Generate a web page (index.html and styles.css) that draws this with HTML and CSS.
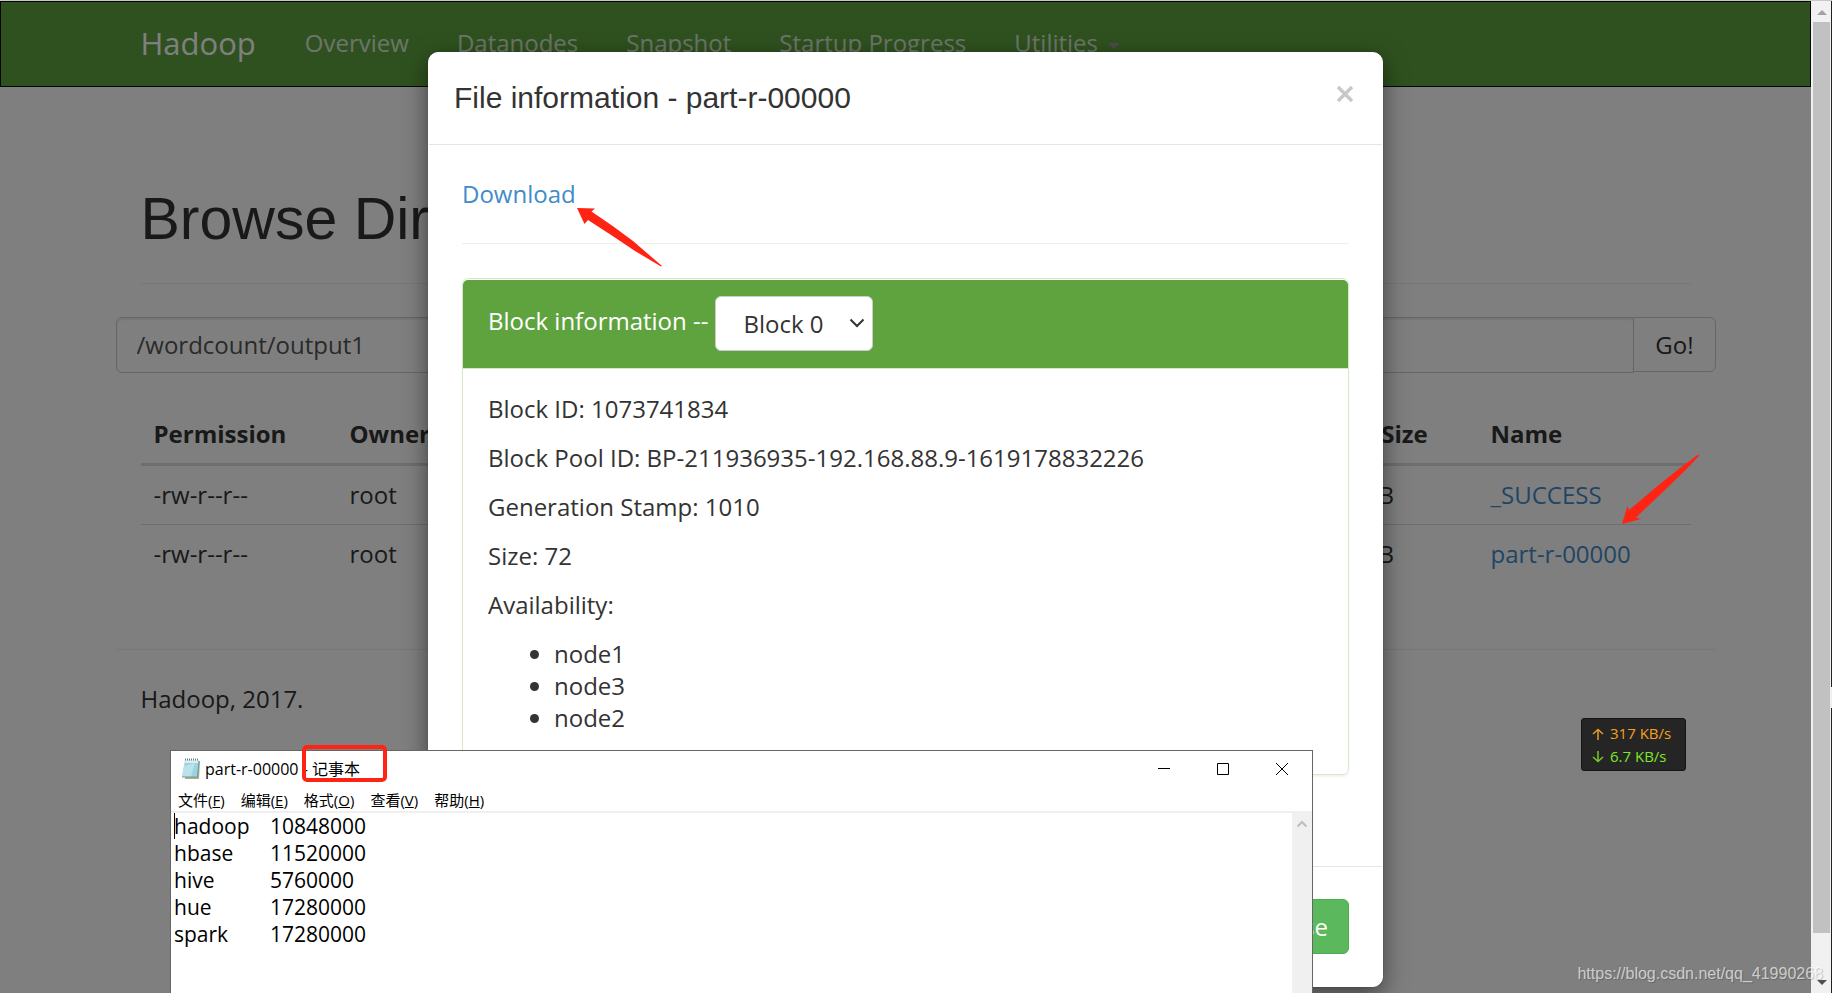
FILE: index.html
```html
<!DOCTYPE html>
<html lang="en">
  <head>
    <meta charset="UTF-8" />
    <meta name="viewport" content="width=device-width, initial-scale=1.0" />
    <title>Browsing HDFS</title>
    <link rel="stylesheet" href="styles.css">
  </head>
  <body>
    <div class="page">
      <header class="navbar">
        <div class="container">
          <a class="brand" href="#">Hadoop</a>
          <nav class="nav">
            <a href="#">Overview</a>
            <a href="#">Datanodes</a>
            <a href="#">Snapshot</a>
            <a href="#">Startup Progress</a>
            <a href="#">Utilities <span class="caret"></span></a>
          </nav>
        </div>
      </header>

      <main class="content">
        <div class="page-header">
          <h1>Browse Directory</h1>
        </div>
        <form class="input-group">
          <input type="text" value="/wordcount/output1" aria-label="Directory" />
          <button type="button">Go!</button>
        </form>
        <div class="table-wrap">
          <table class="files">
            <colgroup>
              <col class="col-permission" />
              <col class="col-owner" />
              <col class="col-group" />
              <col class="col-size" />
              <col class="col-replication" />
              <col class="col-block" />
              <col />
            </colgroup>
            <thead>
              <tr>
                <th>Permission</th>
                <th>Owner</th>
                <th>Group</th>
                <th>Size</th>
                <th>Replication</th>
                <th>Block Size</th>
                <th>Name</th>
              </tr>
            </thead>
            <tbody>
              <tr>
                <td>-rw-r--r--</td>
                <td>root</td>
                <td>supergroup</td>
                <td>0 B</td>
                <td>3</td>
                <td>128 MB</td>
                <td><a href="#">_SUCCESS</a></td>
              </tr>
              <tr>
                <td>-rw-r--r--</td>
                <td>root</td>
                <td>supergroup</td>
                <td>72 B</td>
                <td>3</td>
                <td>128 MB</td>
                <td><a href="#">part-r-00000</a></td>
              </tr>
            </tbody>
          </table>
        </div>
        <footer class="footer">
          <p>Hadoop, 2017.</p>
        </footer>
      </main>

      <div class="backdrop">
        <div class="modal" role="dialog" aria-labelledby="modal-title">
          <div class="modal-header">
            <h4 id="modal-title">File information - part-r-00000</h4>
            <button class="close" type="button" aria-label="Close">
              <svg width="18" height="18" viewBox="0 0 18 18">
                <path d="M2 2L16 16M16 2L2 16" fill="none" stroke="#c8c8c8" stroke-width="3.4" />
              </svg>
            </button>
          </div>
          <div class="modal-body">
            <a class="download" href="#">Download</a>
            <hr />
            <div class="panel">
              <div class="panel-heading">
                <label for="block-select">Block information --</label>
                <div class="select-wrap">
                  <select id="block-select">
                    <option>Block 0</option>
                  </select>
                  <svg width="16" height="10" viewBox="0 0 16 10">
                    <path d="M1.5 1.5L8 8L14.5 1.5" fill="none" stroke="#333" stroke-width="2" />
                  </svg>
                </div>
              </div>
              <div class="panel-body">
                <p>Block ID: 1073741834</p>
                <p>Block Pool ID: BP-211936935-192.168.88.9-1619178832226</p>
                <p>Generation Stamp: 1010</p>
                <p>Size: 72</p>
                <p>Availability:</p>
                <ul>
                  <li>node1</li>
                  <li>node3</li>
                  <li>node2</li>
                </ul>
              </div>
            </div>
          </div>
          <div class="modal-footer">
            <button class="btn-close" type="button">Close</button>
          </div>
        </div>
      </div>
    </div>

    <div class="scrollbar" aria-hidden="true">
      <svg width="10" height="5" viewBox="0 0 10 5"><path d="M0 5L5 0L10 5Z" fill="#a3a3a3" /></svg>
      <div class="thumb"></div>
      <svg width="10" height="5" viewBox="0 0 10 5"><path d="M0 0L5 5L10 0Z" fill="#505050" /></svg>
    </div>
    <div class="edge"></div>

    <section class="notepad">
      <div class="titlebar">
        <svg width="20" height="22" viewBox="0 0 20 22">
          <path d="M5 3L19 3L18 21L4 21Z" fill="#b9a983" />
          <path d="M4 2L18 2L16 19L1 19Z" fill="#9bd3e0" />
          <path d="M4 2L18 2L17.5 5L3.5 5Z" fill="#d9eff4" />
          <path d="M3 8L14 5L10 19L1 19Z" fill="#b9e2ea" />
          <path d="M4 1.5H18" stroke="#6f7f86" stroke-width="2" stroke-dasharray="1 1" />
          <path d="M18 3L16.5 19H1" fill="none" stroke="#5f9fae" stroke-width="1" />
        </svg>
        <span>part-r-00000 - 记事本</span>
        <div class="window-buttons">
          <button type="button" aria-label="Minimize">
            <svg width="12" height="12" viewBox="0 0 12 12"><path d="M0 5.5H12" stroke="#000" /></svg>
          </button>
          <button type="button" aria-label="Maximize">
            <svg width="12" height="12" viewBox="0 0 12 12"><path d="M.5 .5H11.5V11.5H.5Z" fill="none" stroke="#000" /></svg>
          </button>
          <button type="button" aria-label="Close window">
            <svg width="12" height="12" viewBox="0 0 12 12"><path d="M0 0L12 12M12 0L0 12" stroke="#000" /></svg>
          </button>
        </div>
      </div>
      <div class="menubar">
        <button type="button">文件(<u>F</u>)</button>
        <button type="button">编辑(<u>E</u>)</button>
        <button type="button">格式(<u>O</u>)</button>
        <button type="button">查看(<u>V</u>)</button>
        <button type="button">帮助(<u>H</u>)</button>
      </div>
      <div class="editor">
        <textarea aria-label="Text" spellcheck="false">hadoop	10848000
hbase	11520000
hive	5760000
hue	17280000
spark	17280000</textarea>
        <span class="cursor"></span>
        <div class="editor-scroll">
          <svg width="10" height="8" viewBox="0 0 10 8"><path d="M.5 6.5L5 2L9.5 6.5" fill="none" stroke="#bfbfbf" stroke-width="2.2" /></svg>
        </div>
      </div>
      <span class="highlight"></span>
    </section>

    <svg class="arrow arrow-download" width="86" height="60" viewBox="0 0 86 60">
      <path d="M0 1L18 1.5L14.5 4.5Q35 18 56 34L85 59L84 59.5L58 44Q36 29 11 13L7.5 17Z" fill="#ff2313" />
    </svg>
    <svg class="arrow arrow-file" width="78" height="70" viewBox="0 0 78 70">
      <path d="M0 69L5.5 51L7 55L38 29Q56 14 75.5 0L77.5 .5Q62 17 45 33L14 62.5L19 64Z" fill="#ff2313" />
    </svg>

    <div class="net-speed">
      <div class="up">
        <svg width="12" height="12" viewBox="0 0 12 12"><path d="M6 12V1.5M1 6L6 1.5L11 6" fill="none" stroke="#e69a28" stroke-width="1.5" /></svg>
        317 KB/s
      </div>
      <div class="down">
        <svg width="12" height="12" viewBox="0 0 12 12"><path d="M6 0V10.5M1 6L6 10.5L11 6" fill="none" stroke="#74c92c" stroke-width="1.5" /></svg>
        6.7 KB/s
      </div>
    </div>
    <div class="watermark">https://blog.csdn.net/qq_41990268</div>
  </body>
</html>
```

FILE: styles.css
```css
* {
  box-sizing: border-box;
}
body {
  margin: 0;
  height: 100vh;
  padding-top: 1px;
  display: flex;
  overflow: hidden;
  position: relative;
  background-color: #c8c8c8;
  color: #333;
  font-family: "Open Sans", "Noto Sans", "Noto Sans CJK SC", sans-serif;
  font-size: 24px;
  line-height: 32px;
}
a {
  color: #428bca;
  text-decoration: none;
}
button,
input,
select,
textarea {
  font: inherit;
  color: inherit;
}
h1,
h4,
p {
  margin: 0;
  font-weight: 400;
}
.page {
  position: relative;
  flex: 1;
  min-width: 0;
  background-color: #fff;
}

/* navbar */
.navbar {
  background-color: #5fa33f;
  border: 1px solid #080808;
}
/* the 20px on the left balances the scrollbar */
.container {
  display: flex;
  max-width: 1620px;
  margin: 0 auto;
  padding-left: 20px;
}
.brand {
  padding: 25px 25px 27px;
  color: #fff;
  font-size: 31px;
}
.nav {
  display: flex;
}
.nav a {
  padding: 25px 24px 27px;
  color: #d9ead3;
}
.caret {
  display: inline-block;
  margin-left: 4px;
  vertical-align: middle;
  border-top: 6px solid #999;
  border-left: 6px solid transparent;
  border-right: 6px solid transparent;
}

/* directory listing */
.content {
  max-width: 1620px;
  margin: 0 auto;
  padding: 100px 0 0 20px;
}
.page-header {
  margin: 0 25px 33px;
  padding-bottom: 32px;
  border-bottom: 1px solid #eee;
}
.page-header h1 {
  font-family: "Liberation Sans", Arial, sans-serif;
  font-size: 59px;
  line-height: 64px;
}
.input-group {
  display: flex;
  align-items: flex-start;
  margin-bottom: 32px;
}
.input-group input {
  flex: 1;
  height: 56px;
  padding: 0 20px 2px;
  border: 1px solid #ccc;
  border-radius: 6px 0 0 6px;
  background-color: #fff;
  color: #555;
  box-shadow: inset 0 2px 2px rgba(0, 0, 0, 0.08);
}
.input-group button {
  height: 55px;
  margin-left: -1px;
  padding: 0 21px;
  border: 1px solid #ccc;
  border-radius: 0 6px 6px 0;
  background-color: #fff;
}
.table-wrap {
  padding: 0 25px;
}
.files {
  width: 100%;
  table-layout: fixed;
  border-collapse: separate;
  border-spacing: 0;
}
.files th,
.files td {
  padding: 13px;
  text-align: left;
  white-space: nowrap;
}
.files th {
  border-bottom: 3px solid #ddd;
}
.files tr + tr td {
  border-top: 1px solid #ddd;
}
.col-permission {
  width: 196px;
}
.col-owner {
  width: 130px;
}
.col-group {
  width: 220px;
}
.col-size {
  width: 300px;
}
.col-replication {
  width: 310px;
}
.col-block {
  width: 181px;
}
.footer {
  margin-top: 66px;
  padding: 33px 25px;
  border-top: 1px solid #eee;
}

/* file information dialog */
.backdrop {
  position: absolute;
  inset: 0;
  padding: 51px 20px 0;
  background-color: rgba(0, 0, 0, 0.5);
}
.modal {
  max-width: 955px;
  margin: 0 auto;
  background-color: #fff;
  border: 1px solid #fff;
  border-radius: 10px;
  box-shadow: 0 0 1px rgba(0, 0, 0, 0.5), 0 8px 25px rgba(0, 0, 0, 0.5);
}
.modal-header {
  display: flex;
  justify-content: space-between;
  align-items: flex-start;
  padding: 24px 28px 25px 25px;
  border-bottom: 1px solid #e5e5e5;
}
.modal-header h4 {
  font-family: "Liberation Sans", Arial, sans-serif;
  font-size: 30px;
  line-height: 42px;
}
.close {
  display: flex;
  margin-top: 8px;
  padding: 0;
  border: 0;
  background: none;
}
.modal-body {
  padding: 33px;
}
.download {
  display: block;
}
.modal-body hr {
  margin: 33px 0 34px;
  border: 0;
  border-top: 1px solid #eee;
}
.panel {
  margin-bottom: 33px;
  padding-top: 1px;
  border: 1px solid #d6e9c6;
  border-radius: 6px;
  box-shadow: 0 2px 2px rgba(0, 0, 0, 0.05);
}
.panel-heading {
  display: flex;
  align-items: center;
  gap: 7px;
  padding: 16px 25px 17px;
  border-bottom: 1px solid #d6e9c6;
  border-radius: 5px 5px 0 0;
  background-color: #5fa33f;
  color: #fff;
}
.panel-heading label {
  padding-bottom: 6px;
  font-weight: 500;
}
.select-wrap {
  position: relative;
}
.select-wrap select {
  display: block;
  width: 158px;
  height: 55px;
  padding: 0 27px;
  appearance: none;
  border: 1px solid #ccc;
  border-radius: 6px;
  background-color: #fff;
  color: #333;
}
.select-wrap svg {
  position: absolute;
  top: 22px;
  right: 8px;
  pointer-events: none;
}
.panel-body {
  padding: 24px 25px;
}
.panel-body p {
  margin-bottom: 17px;
}
.panel-body ul {
  margin: 0 0 16px;
  padding-left: 66px;
}
.modal-footer {
  display: flex;
  justify-content: flex-end;
  margin-top: 25px;
  padding: 32px 33px;
  border-top: 1px solid #e5e5e5;
}
.btn-close {
  height: 55px;
  padding: 0 20px;
  border: 1px solid #4cae4c;
  border-radius: 6px;
  background-color: #5cb85c;
  color: #fff;
  font-weight: 500;
}

/* browser scrollbar */
.scrollbar {
  display: flex;
  flex-direction: column;
  align-items: center;
  gap: 7px;
  width: 20px;
  padding: 9px 1px 8px 2px;
  background-color: #f1f1f1;
}
.scrollbar svg {
  flex: none;
}
.thumb {
  align-self: stretch;
  flex: 1;
  margin-bottom: 40px;
  background-color: #c1c1c1;
}
.edge {
  width: 1px;
  background: linear-gradient(#222 686px, #eee 686px, #eee 707px, #222 707px);
}

/* notepad window */
.notepad {
  position: absolute;
  left: 170px;
  bottom: 0;
  width: 1143px;
  height: 243px;
  display: flex;
  flex-direction: column;
  border: 1px solid #666;
  border-bottom: 0;
  background-color: #fff;
  color: #000;
  font-size: 15px;
  line-height: 24px;
}
.titlebar {
  display: flex;
  align-items: center;
  gap: 4px;
  height: 36px;
  padding: 0 24px 0 10px;
  font-size: 16px;
}
.window-buttons {
  display: flex;
  gap: 47px;
  margin-left: auto;
}
.window-buttons button {
  display: flex;
  padding: 0;
  border: 0;
  background: none;
}
.menubar {
  display: flex;
  gap: 16px;
  height: 26px;
  padding-left: 7px;
  border-bottom: 2px solid #f0f0f0;
}
.menubar button {
  padding: 1px 0 0;
  border: 0;
  background: none;
}
.editor {
  position: relative;
  flex: 1;
  display: flex;
}
.editor textarea {
  flex: 1;
  padding: 0 3px;
  border: 0;
  outline: 0;
  resize: none;
  overflow: hidden;
  background: none;
  color: #000;
  font-size: 21px;
  line-height: 27px;
  tab-size: 96px;
}
.cursor {
  position: absolute;
  top: 0;
  left: 3px;
  width: 1px;
  height: 26px;
  background-color: #000;
}
.editor-scroll {
  width: 20px;
  padding-left: 5px;
  background-color: #f0f0f0;
}
.editor-scroll svg {
  display: block;
  margin-top: 7px;
}
.highlight {
  position: absolute;
  top: -6px;
  left: 131px;
  width: 85px;
  height: 37px;
  border: 4px solid #ff2313;
  border-radius: 5px;
}

/* markers and desktop widgets */
.arrow {
  position: absolute;
}
.arrow-download {
  top: 207px;
  left: 577px;
}
.arrow-file {
  top: 455px;
  left: 1622px;
}
.net-speed {
  position: absolute;
  top: 718px;
  right: 146px;
  width: 105px;
  height: 53px;
  padding: 3px 10px;
  border: 1px solid #151515;
  border-radius: 3px;
  background-color: #252525;
  font-size: 15px;
  line-height: 23px;
}
.net-speed div {
  display: flex;
  align-items: center;
  gap: 6px;
  white-space: nowrap;
}
.up {
  color: #f5a11c;
}
.down {
  color: #80e42c;
}
.watermark {
  position: absolute;
  right: 9px;
  bottom: 7px;
  color: rgba(255, 255, 255, 0.65);
  font-family: "Liberation Sans", Arial, sans-serif;
  font-size: 16px;
  line-height: 24px;
  text-shadow: 1px 1px 1px rgba(0, 0, 0, 0.2);
}
```
